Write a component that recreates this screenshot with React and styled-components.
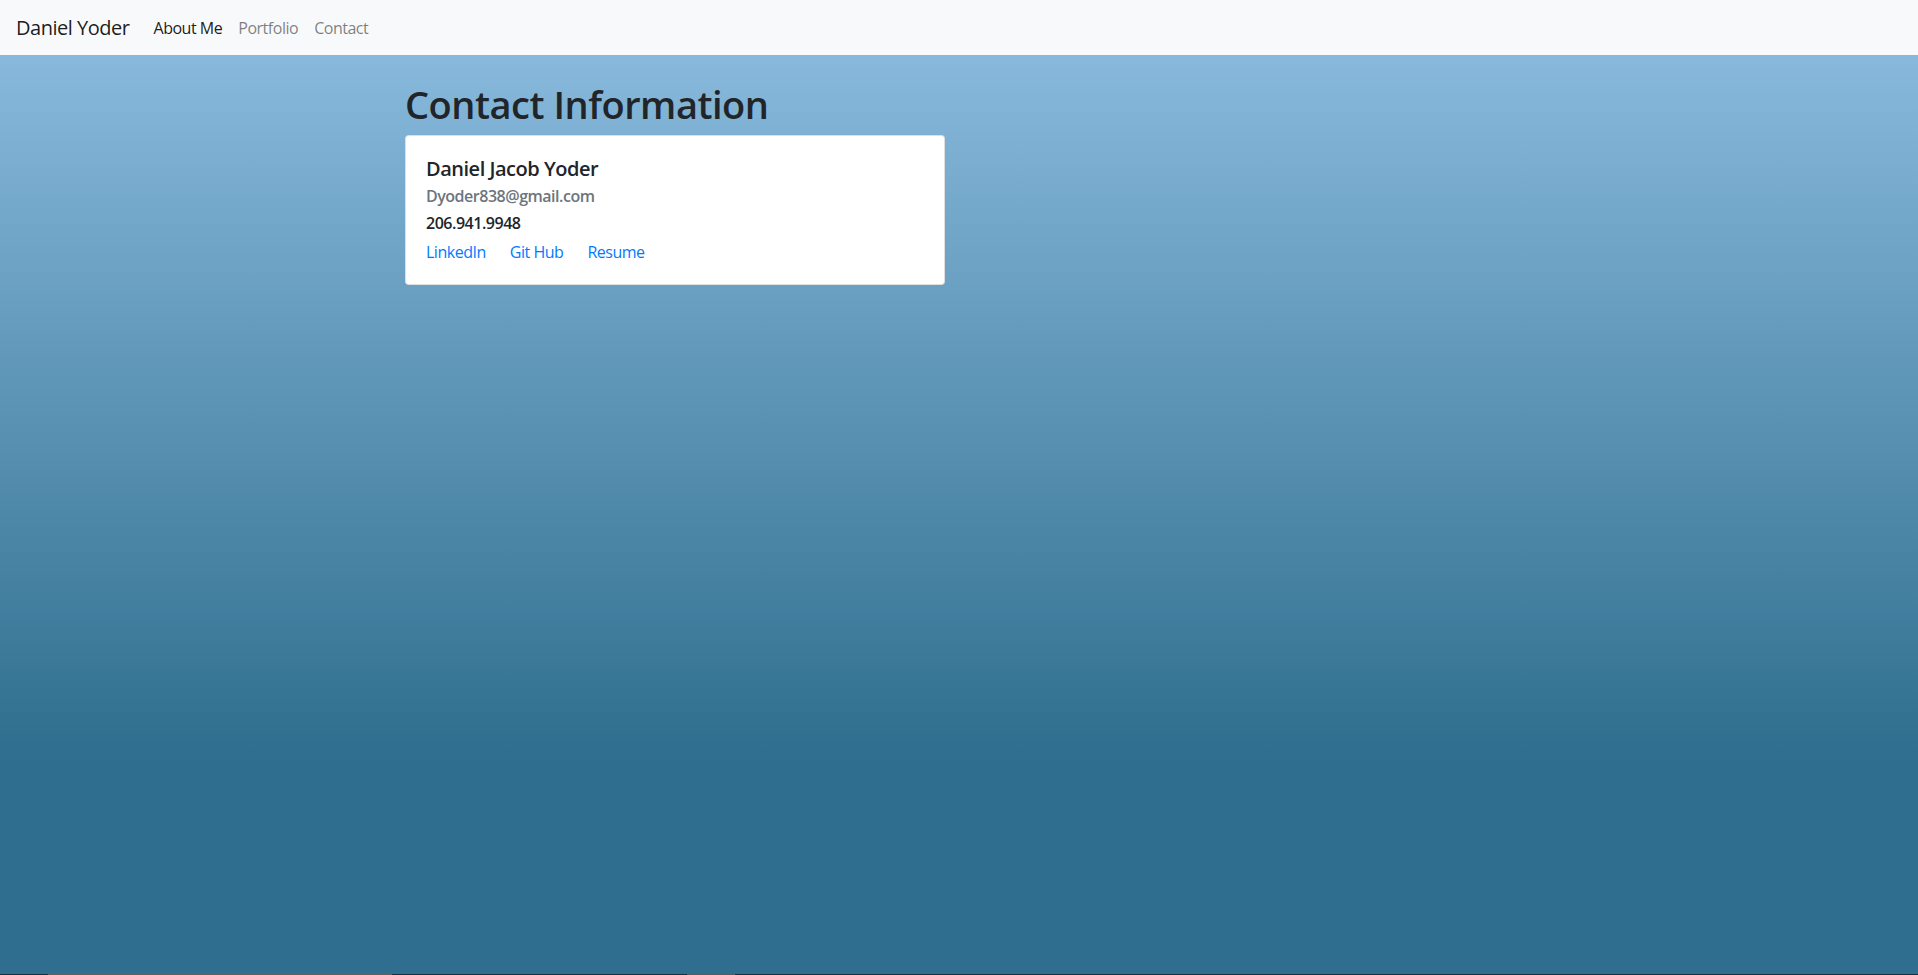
import React from 'react';
import styled, { createGlobalStyle } from 'styled-components';

const GlobalStyle = createGlobalStyle`
  * { box-sizing: border-box; }
  html, body { margin: 0; padding: 0; }
  body {
    font-family: "Segoe UI", "Open Sans", "Noto Sans", sans-serif;
    font-size: 16px;
    line-height: 1.5;
    letter-spacing: -0.03em;
    color: #212529;
  }
`;

const links = [
  { label: 'About Me', active: true },
  { label: 'Portfolio' },
  { label: 'Contact' },
];

const bottomStrip = [
  { w: 48, c: '#14313f' },
  { w: 344, c: '#5b6263' },
  { w: 295, c: '#14313f' },
  { w: 48, c: '#4e5d66' },
  { w: 0, c: '#14313f', grow: true },
];

const App = () => {
  return (
    <>
      <GlobalStyle />
      <Page>
        <Navbar>
          <Brand href="#">Daniel Yoder</Brand>
          <NavList>
            {links.map((l) => (
              <NavLink key={l.label} href="#" $active={l.active}>{l.label}</NavLink>
            ))}
          </NavList>
        </Navbar>
        <Main>
          <Container>
            <Heading>Contact Information</Heading>
            <Card>
              <CardTitle>Daniel Jacob Yoder</CardTitle>
              <CardSubtitle>Dyoder838@gmail.com</CardSubtitle>
              <Phone>206.941.9948</Phone>
              <LinkRow>
                <CardLink href="#">LinkedIn</CardLink>
                <CardLink href="#">Git Hub</CardLink>
                <CardLink href="#">Resume</CardLink>
              </LinkRow>
            </Card>
          </Container>
        </Main>
        <Strip>
          {bottomStrip.map((s, i) => (
            <StripPart key={i} $w={s.w} $c={s.c} $grow={s.grow} />
          ))}
        </Strip>
      </Page>
    </>
  );
};

const Page = styled.div`
  height: 100vh;
  display: flex;
  flex-direction: column;
`;

const Navbar = styled.nav`
  height: 55px;
  flex-shrink: 0;
  background: #f8f9fa;
  display: flex;
  align-items: center;
  padding: 0 16px;
`;

const Brand = styled.a`
  font-size: 20px;
  line-height: 30px;
  color: rgba(0, 0, 0, 0.9);
  text-decoration: none;
  margin-right: 16px;
`;

const NavList = styled.div`
  display: flex;
`;

const NavLink = styled.a`
  padding: 8px;
  font-size: 16px;
  color: ${(p) => (p.$active ? 'rgba(0, 0, 0, 0.9)' : 'rgba(0, 0, 0, 0.5)')};
  text-decoration: none;
`;

const Main = styled.main`
  flex: 1;
  background-color: #2f6e8e;
  background-image: linear-gradient(180deg, #88b9dc 0px, #2f6e8e 703px);
  background-repeat: no-repeat;
  padding-top: 27px;
`;

const Container = styled.div`
  width: 1140px;
  margin: 0 auto;
  padding: 0 15px 0 16px;
`;

const Heading = styled.h1`
  margin: 0 0 9px;
  font-size: 38px;
  font-weight: 600;
  line-height: 44px;
`;

const Card = styled.div`
  width: 540px;
  background: #fff;
  border: 1px solid rgba(0, 0, 0, 0.125);
  border-radius: 4px;
  padding: 21px 20px 20px;
`;

const CardTitle = styled.h5`
  margin: 0 0 12px;
  font-size: 20px;
  font-weight: 600;
  line-height: 1.2;
`;

const CardSubtitle = styled.h6`
  margin: -6px 0 0;
  font-size: 16px;
  font-weight: 600;
  line-height: 1.2;
  color: #6c757d;
`;

const Phone = styled.p`
  margin: 5px 0 5px;
  font-size: 16px;
  font-weight: 600;
`;

const LinkRow = styled.div`
  display: flex;
  gap: 24px;
`;

const CardLink = styled.a`
  color: #007bff;
  text-decoration: none;
`;

const Strip = styled.div`
  height: 1px;
  flex-shrink: 0;
  display: flex;
`;

const StripPart = styled.div`
  width: ${(p) => p.$w}px;
  flex-grow: ${(p) => (p.$grow ? 1 : 0)};
  background: ${(p) => p.$c};
`;

export default App;
